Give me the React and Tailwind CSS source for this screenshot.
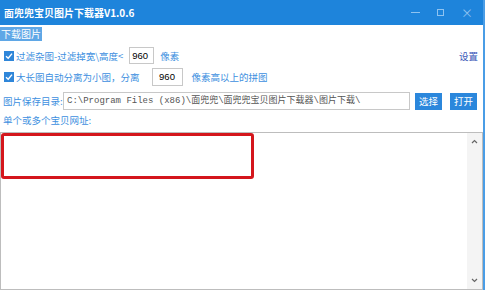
import React from "react";

const cjk = { fontFamily: '"Microsoft YaHei", "Noto Sans CJK SC", "Noto Sans", sans-serif' };

function Check() {
  return (
    <span className="w-[10px] h-[10px] bg-[#2f86d9] flex items-center justify-center mr-[2px] shrink-0">
      <svg width="8" height="8" viewBox="0 0 8 8">
        <path d="M1 4.2 L3.2 6.2 L7 1.6" stroke="white" strokeWidth="1.4" fill="none" />
      </svg>
    </span>
  );
}

function Chevron({ up }) {
  return (
    <svg width="7" height="5" viewBox="0 0 7 5">
      <path d={up ? "M1 4 L3.5 1.5 L6 4" : "M1 1 L3.5 3.5 L6 1"} stroke="#666" strokeWidth="1.2" fill="none" />
    </svg>
  );
}

export default function App() {
  return (
    <div className="w-[485px] h-[290px] bg-white relative overflow-hidden text-[9.5px] whitespace-nowrap" style={cjk}>
      {/* title bar */}
      <div className="h-[25px] bg-[#1e84db] flex items-center justify-between pl-[4px] pr-[10px] border-r-2 border-[#4a9de6]">
        <span className="text-white font-bold text-[10px]">面兜兜宝贝图片下载器V1.0.6</span>
        <div className="flex items-center gap-[17px]">
          <span className="w-[9px] h-[1px] bg-[#8fc3f0]" />
          <span className="w-[7px] h-[7px] border border-[#8fc3f0]" />
          <span className="text-[12px] leading-none text-[#8fc3f0]">×</span>
        </div>
      </div>

      <div className="border-r-2 border-[#4a9de6] h-[265px] flex flex-col">
        {/* tab */}
        <div className="pt-[2px]">
          <span className="inline-block bg-[#5fa7e6] text-white px-[1px] h-[14px] leading-[14px] text-[10px]">下载图片</span>
        </div>

        {/* row 1 */}
        <div className="flex items-center h-[17px] mt-[6px] pl-[4px] pr-[5px]">
          <Check />
          <span className="text-[#3d8fe0]">过滤杂图-过滤掉宽\高度&lt;</span>
          <span className="ml-[6px] w-[25px] h-[17px] border border-[#c8c8c8] text-[9.5px] text-black flex items-center pl-[2px]" style={{ fontFamily: '"Liberation Sans", sans-serif' }}>960</span>
          <span className="ml-[6px] text-[#3d8fe0]">像素</span>
          <span className="ml-auto text-[#3a57b8]">设置</span>
        </div>

        {/* row 2 */}
        <div className="flex items-center h-[18px] mt-[4px] pl-[4px]">
          <Check />
          <span className="text-[#3d8fe0]">大长图自动分离为小图，分离</span>
          <span className="ml-[12px] w-[31px] h-[18px] border border-[#c8c8c8] text-[9.5px] text-black flex items-center justify-center" style={{ fontFamily: '"Liberation Sans", sans-serif' }}>960</span>
          <span className="ml-[9px] text-[#3d8fe0]">像素高以上的拼图</span>
        </div>

        {/* row 3 */}
        <div className="flex items-center h-[18px] mt-[6px] pl-[3px]">
          <span className="text-[#3d8fe0] w-[58px]">图片保存目录:</span>
          <span className="ml-[2px] w-[347px] h-[18px] border border-[#c8c8c8] text-[9px] text-[#555] flex items-center pl-[3px] overflow-hidden" style={{ fontFamily: '"Liberation Mono", "Noto Sans CJK SC", monospace' }}>C:\Program Files (x86)\面兜兜\面兜兜宝贝图片下载器\图片下载\</span>
          <span className="ml-[5px] w-[27px] h-[17px] bg-[#2b87dc] text-white flex items-center justify-center">选择</span>
          <span className="ml-[8px] w-[27px] h-[17px] bg-[#2b87dc] text-white flex items-center justify-center">打开</span>
        </div>

        {/* row 4 */}
        <div className="h-[13px] mt-[4px] pl-[3px] text-[#3d8fe0] leading-[13px]">单个或多个宝贝网址:</div>

        {/* textarea */}
        <div className="mt-[5px] flex-1 border border-[#bdbdbd] relative flex">
          <div className="flex-1" />
          <div className="w-[15px] bg-[#f4f4f4] flex flex-col justify-between items-center py-[6px]">
            <Chevron up />
            <Chevron />
          </div>
          <div className="absolute left-0 top-0 w-[253px] h-[46px] border-[3px] border-[#d4161c] rounded-[3px]" />
        </div>
      </div>
    </div>
  );
}
